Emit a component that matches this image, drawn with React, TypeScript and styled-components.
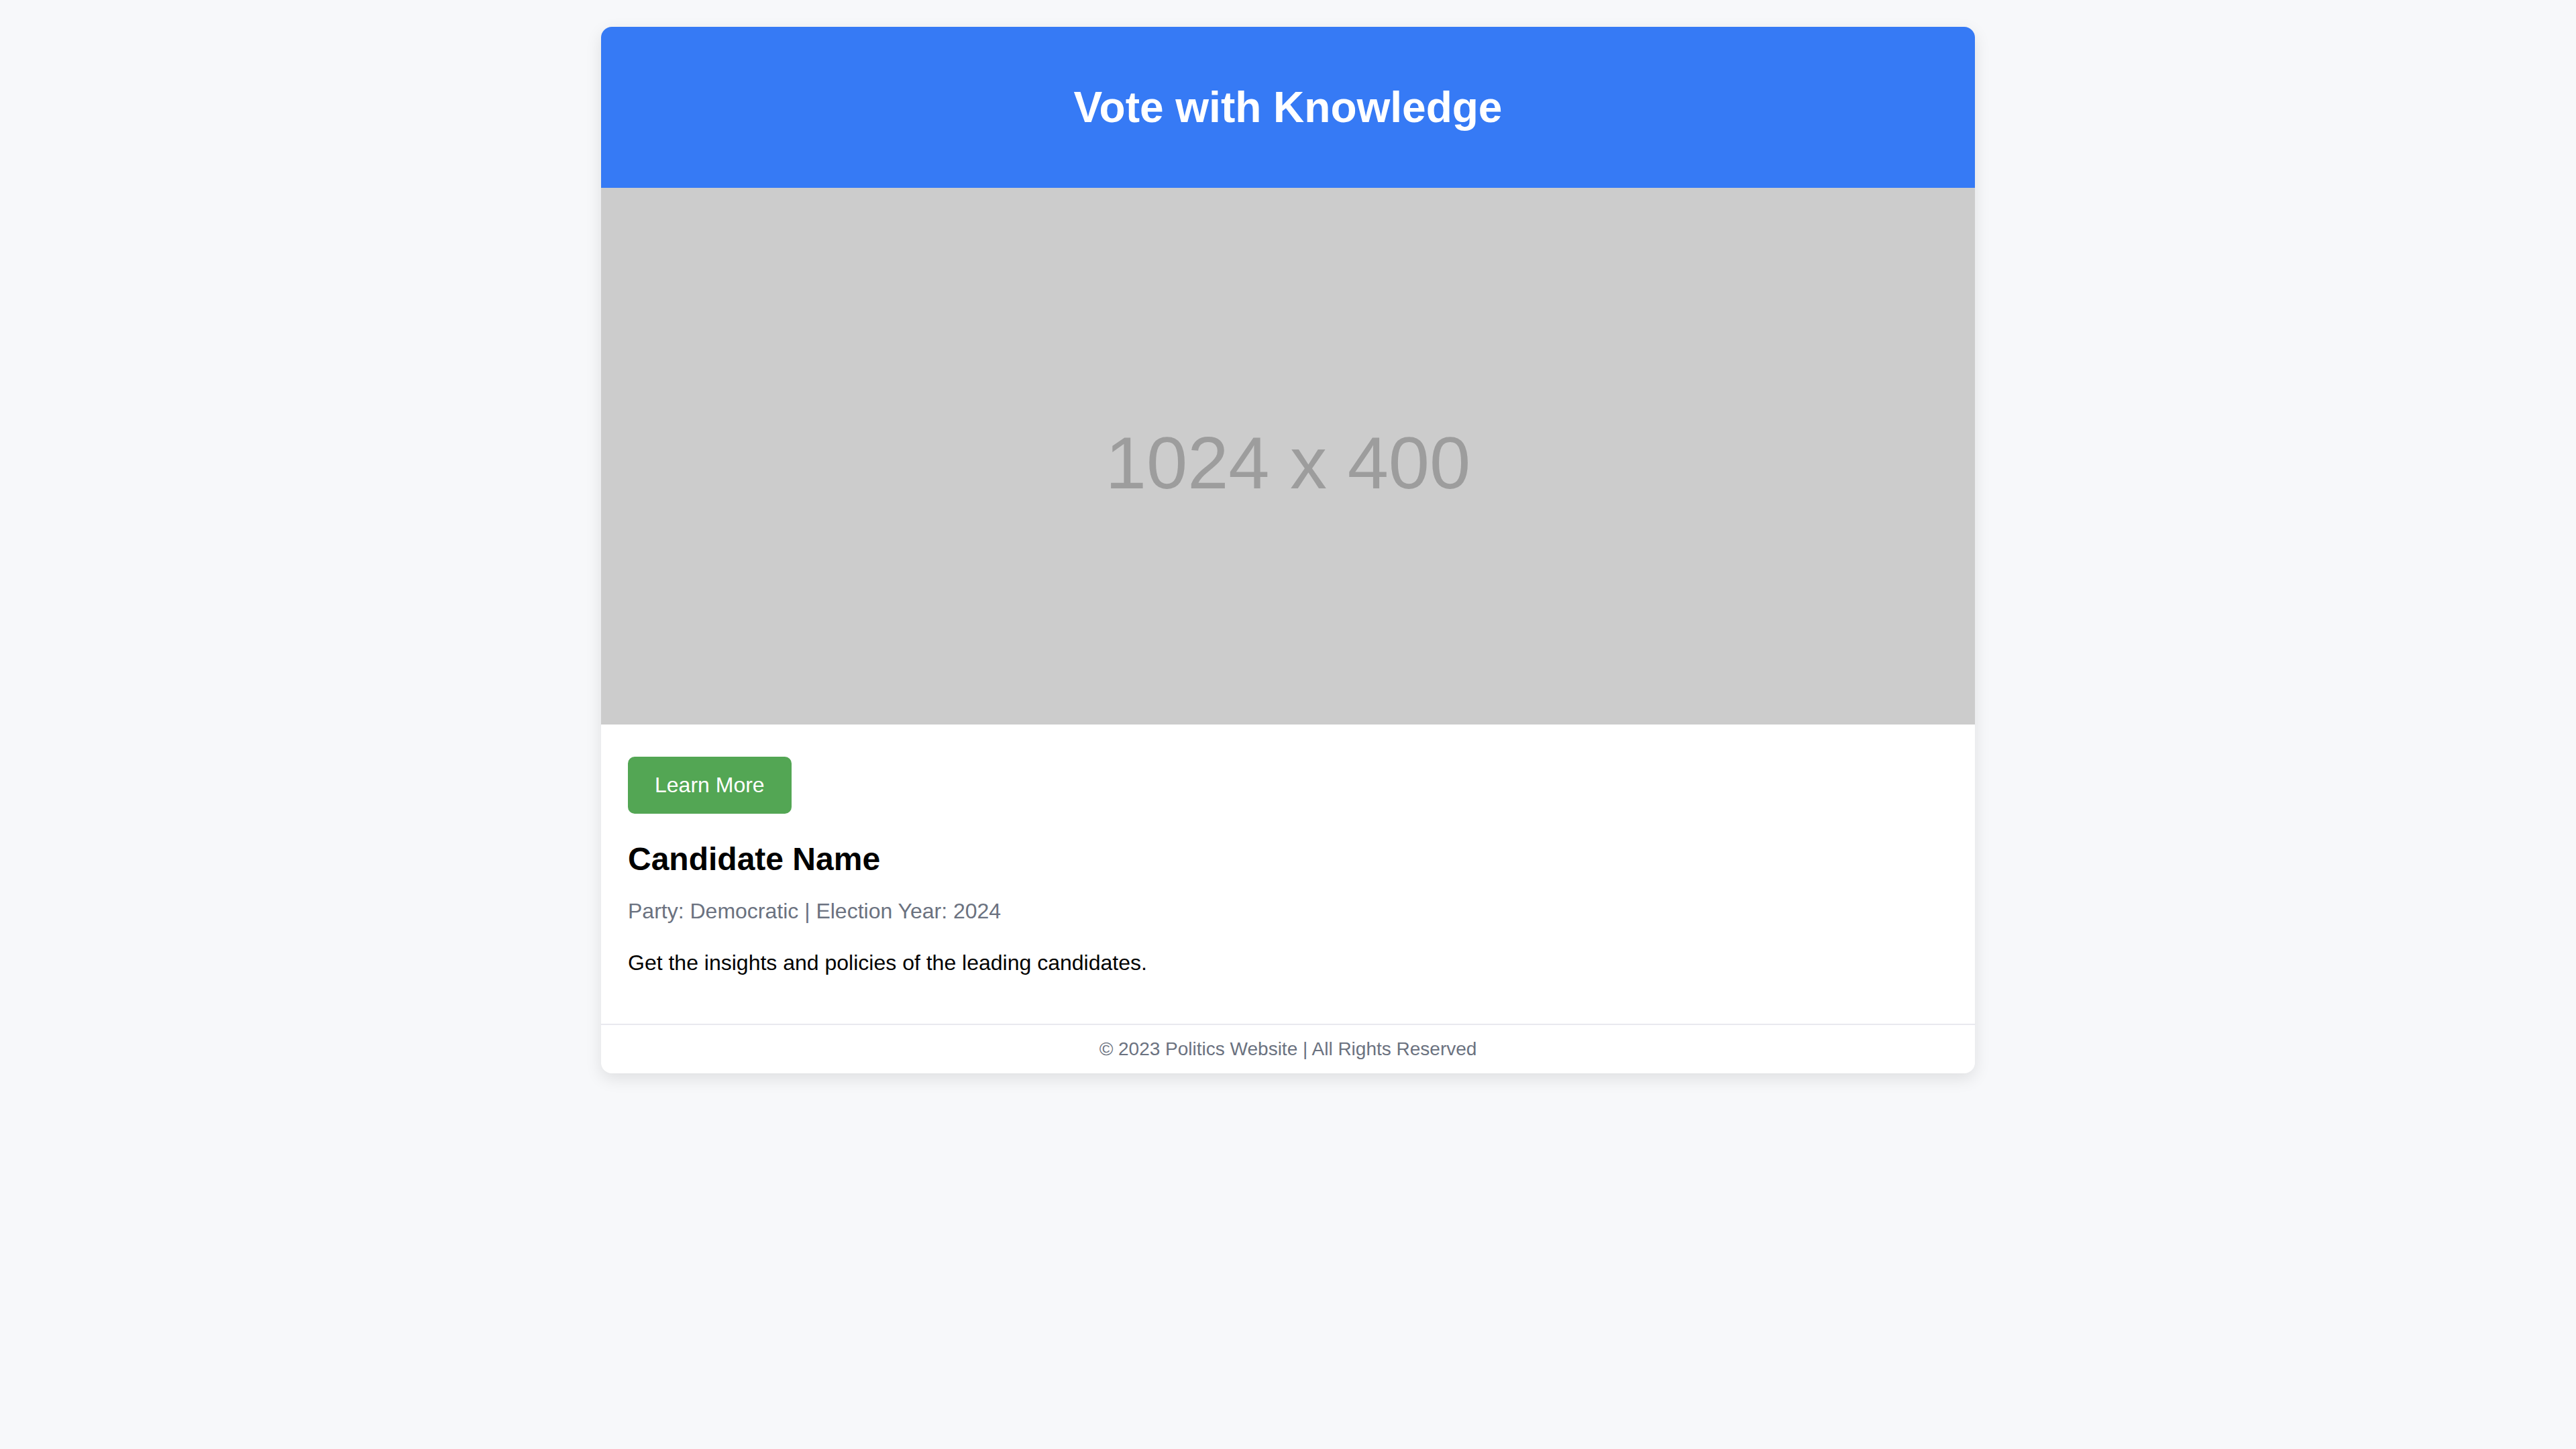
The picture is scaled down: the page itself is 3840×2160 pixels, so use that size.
import React from "react";
import styled, { createGlobalStyle } from "styled-components";

const GlobalStyle = createGlobalStyle`
  html, body {
    margin: 0;
    padding: 0;
    background: #f7f8fa;
    font-family: "Liberation Sans", Arial, sans-serif;
    color: #000000;
  }
`;

const Page = styled.div`
  display: flex;
  justify-content: center;
  padding: 40px 0;
`;

const Card = styled.article`
  width: 2048px;
  background: #ffffff;
  border-radius: 16px;
  overflow: hidden;
  box-shadow: 0 8px 24px rgba(0, 0, 0, 0.1);
  display: flex;
  flex-direction: column;
`;

const Header = styled.header`
  background: #367af5;
  padding: 40px;
  display: flex;
  justify-content: center;
`;

const Title = styled.h1`
  margin: 42.88px 0;
  font-size: 64px;
  font-weight: 700;
  color: #ffffff;
  line-height: normal;
`;

const Placeholder = styled.div`
  height: 800px;
  background: #cccccc;
  display: flex;
  align-items: center;
  justify-content: center;
  margin-bottom: 8px;
`;

const PlaceholderText = styled.span`
  font-size: 110px;
  color: #9d9d9d;
  line-height: 1;
  padding-top: 20px;
`;

const Content = styled.section`
  padding: 40px;
  display: flex;
  flex-direction: column;
  align-items: flex-start;
`;

const Button = styled.a`
  display: inline-block;
  background: #53a654;
  color: #ffffff;
  font-size: 32px;
  line-height: normal;
  padding: 24px 40px;
  border-radius: 10px;
  text-decoration: none;
  cursor: pointer;
`;

const Name = styled.h2`
  margin: 40px 0 32px;
  font-size: 48px;
  font-weight: 700;
  line-height: normal;
`;

const Text = styled.p<{ $muted?: boolean; $gap: number }>`
  margin: 0 0 ${(p) => p.$gap}px;
  font-size: 32px;
  line-height: normal;
  color: ${(p) => (p.$muted ? "#6b7280" : "#000000")};
`;

const Footer = styled.footer`
  border-top: 2px solid #e8e8ee;
  padding: 20px;
  text-align: center;
  font-size: 28px;
  line-height: normal;
  color: #6b7280;
`;

export default function App() {
  return (
    <>
      <GlobalStyle />
      <Page>
        <Card>
          <Header>
            <Title>Vote with Knowledge</Title>
          </Header>
          <Placeholder>
            <PlaceholderText>1024 x 400</PlaceholderText>
          </Placeholder>
          <Content>
            <Button>Learn More</Button>
            <Name>Candidate Name</Name>
            <Text $muted $gap={40}>
              Party: Democratic | Election Year: 2024
            </Text>
            <Text $gap={32}>
              Get the insights and policies of the leading candidates.
            </Text>
          </Content>
          <Footer>© 2023 Politics Website | All Rights Reserved</Footer>
        </Card>
      </Page>
    </>
  );
}
